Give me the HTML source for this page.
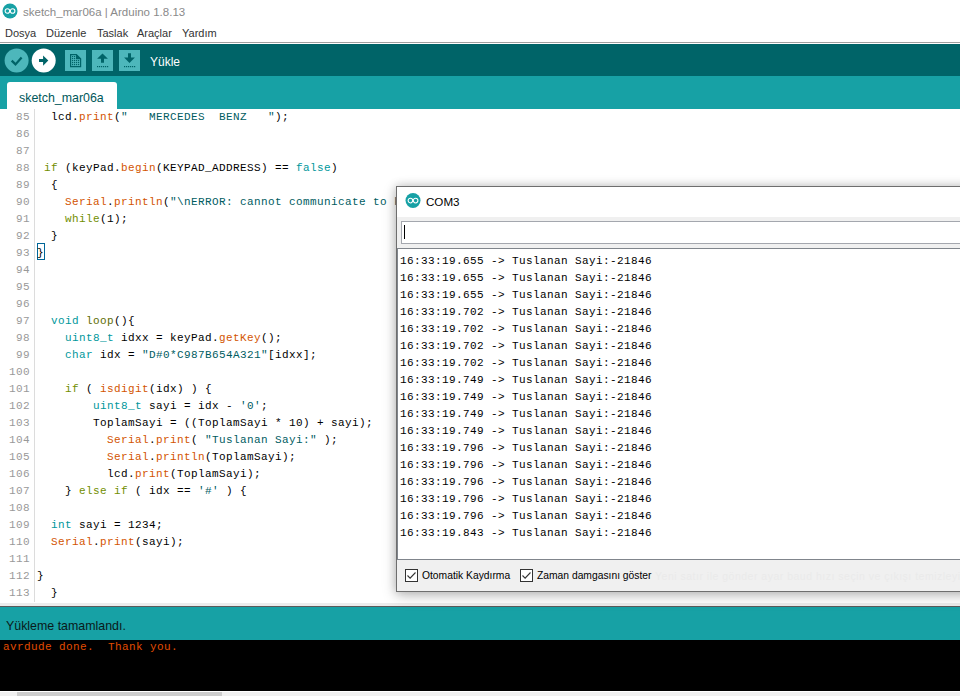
<!DOCTYPE html>
<html><head><meta charset="utf-8">
<style>
*{margin:0;padding:0;box-sizing:border-box}
html,body{width:960px;height:696px;overflow:hidden;background:#fff;position:relative}
body{font-family:"Liberation Sans",sans-serif}
.a{position:absolute}
.sans{font-family:"Liberation Sans",sans-serif}
.mono{font-family:"Liberation Mono",monospace;font-size:11px;letter-spacing:0.4px;white-space:pre;line-height:17px}
#title{left:23px;top:3.5px;font-size:11.5px;color:#8a8a8a;white-space:pre;line-height:16px}
.menu{top:26px;font-size:11px;color:#333;line-height:14px;white-space:pre}
#sep{left:0;top:42px;width:960px;height:1px;background:#a0a0a0}
#toolbar{left:0;top:44px;width:960px;height:32px;background:#006468}
#tabbar{left:0;top:76px;width:960px;height:33px;background:#17A1A5}
#tab{left:7px;top:82px;width:110px;height:27px;background:#fff;border-radius:3px 3px 0 0}
#tabtxt{left:19px;top:91px;font-size:12.4px;color:#00585b;line-height:14px;white-space:pre}
#editor{left:0;top:109px;width:960px;height:494px;background:#fff;overflow:hidden}
#gutline{left:34px;top:109px;width:1px;height:493px;background:#dcdcdc}
.ln{color:#999}
.k1{color:#D35400}.dt{color:#00979C}.rw{color:#728E00}.st{color:#005C5F}.lp{color:#5E6D03}
#split{left:0;top:603px;width:960px;height:3px;background:#ececec}
#splitline{left:0;top:606px;width:960px;height:1px;background:#5a5a5a}
#status{left:0;top:607px;width:960px;height:33px;background:#17A1A5}
#stattxt{left:6px;top:619px;font-size:12.4px;color:#0a1a1a;line-height:14px;white-space:pre}
#console{left:0;top:640px;width:960px;height:51px;background:#000}
#contxt{left:3px;top:639px;color:#E34C00}
#sbar{left:0;top:691px;width:960px;height:1px;background:#fff}
#sbg{left:0;top:692px;width:960px;height:4px;background:#f0f0f0}
#sthumb{left:17px;top:692px;width:205px;height:4px;background:#cdcdcd}
/* serial monitor */
#smshadow{left:388px;top:178px;width:600px;height:424px;}
#sm{left:396px;top:186px;width:600px;height:406px;border:1px solid #6e6e6e;background:#f0f0f0;box-shadow:0 0 9px rgba(0,0,0,0.2),0 4px 14px rgba(0,0,0,0.2)}
#smtitle{left:397px;top:187px;width:570px;height:30px;background:#fff}
#smtxt{left:426px;top:195px;font-size:11.6px;color:#000;line-height:14px;white-space:pre}
#inp{left:401px;top:221px;width:570px;height:23px;border:1px solid #a4a7ae;background:#fff}
#caret{left:404px;top:225px;width:1px;height:14px;background:#000}
#out{left:397px;top:248px;width:570px;height:312px;border-top:1px solid #80858c;border-left:1px solid #80858c;border-bottom:1px solid #80858c;background:#fff}
.cb{width:13px;height:13px;border:1px solid #333;background:#fff}
.cbl{font-size:10.3px;color:#000;line-height:14px;white-space:pre}
</style></head><body>
<!-- title bar -->
<svg class="a" style="left:2px;top:3px" width="16" height="16" viewBox="0 0 16 16">
 <circle cx="8" cy="8" r="7.5" fill="#17A1A5"/>
 <circle cx="5.4" cy="8" r="2.3" fill="none" stroke="#fff" stroke-width="1.05"/>
 <circle cx="10.6" cy="8" r="2.3" fill="none" stroke="#fff" stroke-width="1.05"/>
</svg>
<div id="title" class="a">sketch_mar06a | Arduino 1.8.13</div>
<div class="a menu" style="left:5px">Dosya</div>
<div class="a menu" style="left:46px">Düzenle</div>
<div class="a menu" style="left:97px">Taslak</div>
<div class="a menu" style="left:137px">Araçlar</div>
<div class="a menu" style="left:182px">Yardım</div>
<div id="sep" class="a"></div>
<div id="toolbar" class="a"></div>
<!-- toolbar buttons -->
<svg class="a" style="left:0;top:44px" width="200" height="32" viewBox="0 44 200 32">
 <circle cx="16.6" cy="60.5" r="12" fill="#4DB7BB"/>
 <path d="M11.7 60.6l3.8 3.8l6.1-6.8" fill="none" stroke="#006468" stroke-width="2.3"/>
 <circle cx="43.7" cy="60.5" r="12" fill="#fff"/>
 <path d="M39 59h4.1v-3.4l5.2 4.9l-5.2 5.2v-3.6h-4.1z" fill="#006468"/>
 <rect x="65" y="50" width="21" height="21" fill="#4DB7BB"/>
 <path d="M70.6 54.6h5.8l4.2 4.2v7.8h-10z" fill="none" stroke="#006468" stroke-width="1.2"/>
 <path d="M76 54v5.3h5.3z" fill="#006468"/>
 <g fill="#006468"><rect x="72" y="56" width="1.2" height="1.2"/><rect x="74" y="56" width="1.2" height="1.2"/><rect x="72" y="58" width="1.2" height="1.2"/><rect x="74" y="58" width="1.2" height="1.2"/><rect x="72" y="60" width="1.2" height="1.2"/><rect x="74" y="60" width="1.2" height="1.2"/><rect x="76" y="60" width="1.2" height="1.2"/><rect x="78" y="60" width="1.2" height="1.2"/><rect x="72" y="62" width="1.2" height="1.2"/><rect x="74" y="62" width="1.2" height="1.2"/><rect x="76" y="62" width="1.2" height="1.2"/><rect x="78" y="62" width="1.2" height="1.2"/><rect x="72" y="64" width="1.2" height="1.2"/><rect x="74" y="64" width="1.2" height="1.2"/><rect x="76" y="64" width="1.2" height="1.2"/><rect x="78" y="64" width="1.2" height="1.2"/></g>
 <rect x="92" y="50" width="21" height="21" fill="#4DB7BB"/>
 <path d="M102.5 53.5l5.4 5.2h-3.9v4.1h-3v-4.1h-3.9z" fill="#006468"/>
 <g fill="#006468"><rect x="97" y="66" width="1.2" height="1.2"/><rect x="99" y="66" width="1.2" height="1.2"/><rect x="101" y="66" width="1.2" height="1.2"/><rect x="103" y="66" width="1.2" height="1.2"/><rect x="105" y="66" width="1.2" height="1.2"/><rect x="107" y="66" width="1.2" height="1.2"/></g>
 <rect x="119" y="50" width="21" height="21" fill="#4DB7BB"/>
 <path d="M128 53.2h3v4.2h3.9l-5.4 5.6l-5.4-5.6h3.9z" fill="#006468"/>
 <g fill="#006468"><rect x="124" y="66" width="1.2" height="1.2"/><rect x="126" y="66" width="1.2" height="1.2"/><rect x="128" y="66" width="1.2" height="1.2"/><rect x="130" y="66" width="1.2" height="1.2"/><rect x="132" y="66" width="1.2" height="1.2"/><rect x="134" y="66" width="1.2" height="1.2"/></g>
</svg>
<div class="a" style="left:150px;top:55px;font-size:12px;color:#fff;line-height:14px">Yükle</div>
<div id="tabbar" class="a"></div>
<div id="tab" class="a"></div>
<div id="tabtxt" class="a">sketch_mar06a</div>
<div id="editor" class="a">
</div>
<div id="gutline" class="a"></div>
<div class="a" style="left:37px;top:243px;width:8px;height:17px;border:1px solid #006699"></div>
<!--CODE-->
<div class="a mono ln" style="left:16px;top:109px">85</div>
<div class="a mono" style="left:37px;top:109px">  lcd.<span class="k1">print</span>(<span class="st">&quot;   MERCEDES  BENZ   &quot;</span>);</div>
<div class="a mono ln" style="left:16px;top:126px">86</div>
<div class="a mono ln" style="left:16px;top:143px">87</div>
<div class="a mono ln" style="left:16px;top:160px">88</div>
<div class="a mono" style="left:37px;top:160px"> <span class="rw">if</span> (keyPad.<span class="k1">begin</span>(KEYPAD_ADDRESS) == <span class="dt">false</span>)</div>
<div class="a mono ln" style="left:16px;top:177px">89</div>
<div class="a mono" style="left:37px;top:177px">  {</div>
<div class="a mono ln" style="left:16px;top:194px">90</div>
<div class="a mono" style="left:37px;top:194px">    <span class="k1">Serial</span>.<span class="k1">println</span>(<span class="st">&quot;\nERROR: cannot communicate to keypad&quot;</span>);</div>
<div class="a mono ln" style="left:16px;top:211px">91</div>
<div class="a mono" style="left:37px;top:211px">    <span class="rw">while</span>(1);</div>
<div class="a mono ln" style="left:16px;top:228px">92</div>
<div class="a mono" style="left:37px;top:228px">  }</div>
<div class="a mono ln" style="left:16px;top:245px">93</div>
<div class="a mono" style="left:37px;top:245px">}</div>
<div class="a mono ln" style="left:16px;top:262px">94</div>
<div class="a mono ln" style="left:16px;top:279px">95</div>
<div class="a mono ln" style="left:16px;top:296px">96</div>
<div class="a mono ln" style="left:16px;top:313px">97</div>
<div class="a mono" style="left:37px;top:313px">  <span class="dt">void</span> <span class="lp">loop</span>(){</div>
<div class="a mono ln" style="left:16px;top:330px">98</div>
<div class="a mono" style="left:37px;top:330px">    <span class="dt">uint8_t</span> idxx = keyPad.<span class="k1">getKey</span>();</div>
<div class="a mono ln" style="left:16px;top:347px">99</div>
<div class="a mono" style="left:37px;top:347px">    <span class="dt">char</span> idx = <span class="st">&quot;D#0*C987B654A321&quot;</span>[idxx];</div>
<div class="a mono ln" style="left:9px;top:364px">100</div>
<div class="a mono ln" style="left:9px;top:381px">101</div>
<div class="a mono" style="left:37px;top:381px">    <span class="rw">if</span> ( <span class="k1">isdigit</span>(idx) ) {</div>
<div class="a mono ln" style="left:9px;top:398px">102</div>
<div class="a mono" style="left:37px;top:398px">        <span class="dt">uint8_t</span> sayi = idx - <span class="st">&#x27;0&#x27;</span>;</div>
<div class="a mono ln" style="left:9px;top:415px">103</div>
<div class="a mono" style="left:37px;top:415px">        ToplamSayi = ((ToplamSayi * 10) + sayi);</div>
<div class="a mono ln" style="left:9px;top:432px">104</div>
<div class="a mono" style="left:37px;top:432px">          <span class="k1">Serial</span>.<span class="k1">print</span>( <span class="st">&quot;Tuslanan Sayi:&quot;</span> );</div>
<div class="a mono ln" style="left:9px;top:449px">105</div>
<div class="a mono" style="left:37px;top:449px">          <span class="k1">Serial</span>.<span class="k1">println</span>(ToplamSayi);</div>
<div class="a mono ln" style="left:9px;top:466px">106</div>
<div class="a mono" style="left:37px;top:466px">          lcd.<span class="k1">print</span>(ToplamSayi);</div>
<div class="a mono ln" style="left:9px;top:483px">107</div>
<div class="a mono" style="left:37px;top:483px">    } <span class="rw">else</span> <span class="rw">if</span> ( idx == <span class="st">&#x27;#&#x27;</span> ) {</div>
<div class="a mono ln" style="left:9px;top:500px">108</div>
<div class="a mono ln" style="left:9px;top:517px">109</div>
<div class="a mono" style="left:37px;top:517px">  <span class="dt">int</span> sayi = 1234;</div>
<div class="a mono ln" style="left:9px;top:534px">110</div>
<div class="a mono" style="left:37px;top:534px">  <span class="k1">Serial</span>.<span class="k1">print</span>(sayi);</div>
<div class="a mono ln" style="left:9px;top:551px">111</div>
<div class="a mono ln" style="left:9px;top:568px">112</div>
<div class="a mono" style="left:37px;top:568px">}</div>
<div class="a mono ln" style="left:9px;top:585px">113</div>
<div class="a mono" style="left:37px;top:585px">  }</div>
<!--/CODE-->
<div id="split" class="a"></div>
<div id="splitline" class="a"></div>
<div id="status" class="a"></div>
<div id="stattxt" class="a">Yükleme tamamlandı.</div>
<div id="console" class="a"></div>
<div id="contxt" class="a mono">avrdude done.  Thank you.</div>
<div id="sbar" class="a"></div>
<div id="sbg" class="a"></div>
<div id="sthumb" class="a"></div>
<!-- serial monitor -->
<div id="sm" class="a"></div>
<div id="smtitle" class="a"></div>
<svg class="a" style="left:405px;top:193px" width="16" height="16" viewBox="0 0 16 16">
 <circle cx="8" cy="7.5" r="7.5" fill="#17A1A5"/>
 <circle cx="5.4" cy="7.6" r="2.3" fill="none" stroke="#fff" stroke-width="1.05"/>
 <circle cx="10.6" cy="7.6" r="2.3" fill="none" stroke="#fff" stroke-width="1.05"/>
</svg>
<div id="smtxt" class="a">COM3</div>
<div id="inp" class="a"></div>
<div id="caret" class="a"></div>
<div id="out" class="a"></div>
<!--SM--><div class="a mono" style="left:400px;top:253px">16:33:19.655 -&gt; Tuslanan Sayi:-21846
16:33:19.655 -&gt; Tuslanan Sayi:-21846
16:33:19.655 -&gt; Tuslanan Sayi:-21846
16:33:19.702 -&gt; Tuslanan Sayi:-21846
16:33:19.702 -&gt; Tuslanan Sayi:-21846
16:33:19.702 -&gt; Tuslanan Sayi:-21846
16:33:19.702 -&gt; Tuslanan Sayi:-21846
16:33:19.749 -&gt; Tuslanan Sayi:-21846
16:33:19.749 -&gt; Tuslanan Sayi:-21846
16:33:19.749 -&gt; Tuslanan Sayi:-21846
16:33:19.749 -&gt; Tuslanan Sayi:-21846
16:33:19.796 -&gt; Tuslanan Sayi:-21846
16:33:19.796 -&gt; Tuslanan Sayi:-21846
16:33:19.796 -&gt; Tuslanan Sayi:-21846
16:33:19.796 -&gt; Tuslanan Sayi:-21846
16:33:19.796 -&gt; Tuslanan Sayi:-21846
16:33:19.843 -&gt; Tuslanan Sayi:-21846</div><!--/SM-->
<div class="a cb" style="left:405px;top:569px"><svg width="11" height="11" viewBox="0 0 11 11" style="position:absolute;left:0;top:0"><path d="M1.5 5.5l2.6 2.6l5.4-5.6" fill="none" stroke="#333" stroke-width="1.1"/></svg></div>
<div class="a cbl" style="left:422px;top:569px">Otomatik Kaydırma</div>
<div class="a cb" style="left:520px;top:569px"><svg width="11" height="11" viewBox="0 0 11 11" style="position:absolute;left:0;top:0"><path d="M1.5 5.5l2.6 2.6l5.4-5.6" fill="none" stroke="#333" stroke-width="1.1"/></svg></div>
<div class="a cbl" style="left:537px;top:569px">Zaman damgasını göster</div>
<div class="a cbl" style="left:655px;top:569px;color:#eaeaea;font-size:10.5px;letter-spacing:0.5px">Yeni satır ile gönder ayar baud hızı seçin ve çıkışı temizleyin</div>
</body></html>
